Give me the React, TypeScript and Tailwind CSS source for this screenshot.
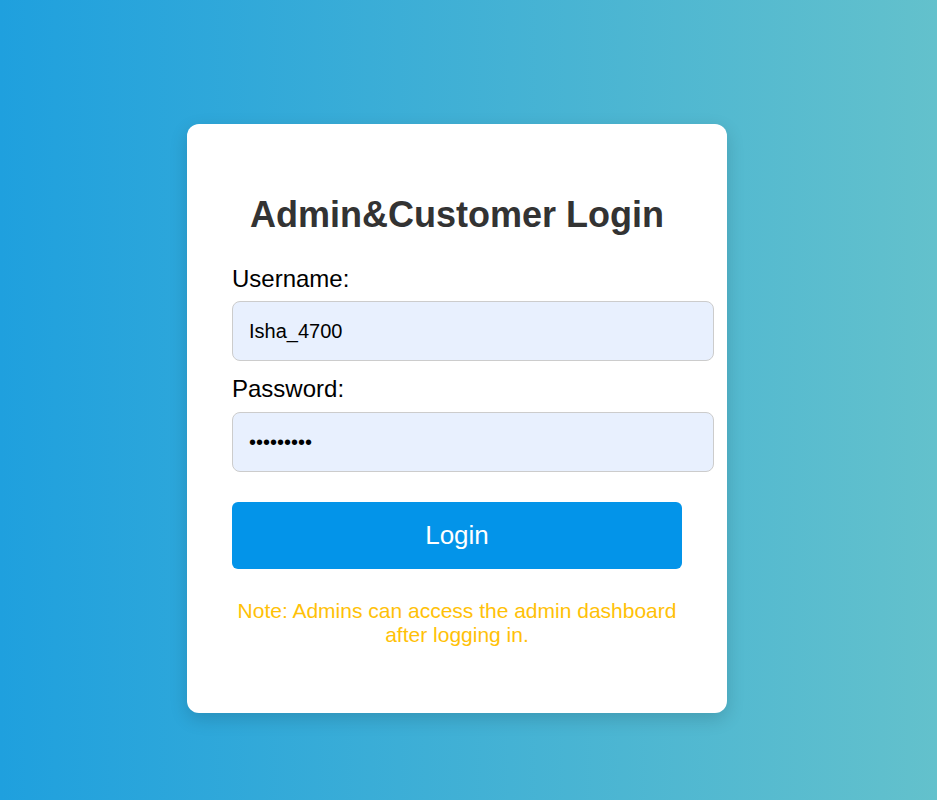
import { useState } from 'react';

export default function App() {
    const [username, setUsername] = useState('Isha_4700');
    const [password, setPassword] = useState('123456789');

    return (
        <div className="min-h-screen w-full flex justify-center items-start pt-[124px] pr-[23px] bg-linear-to-r/srgb from-[#1fa0de] to-[#63c1cc] font-['Liberation_Sans',Arial,sans-serif]">
            <div className="w-[540px] bg-white rounded-xl px-[45px] pt-[70px] pb-[66px] shadow-[0_6px_18px_rgba(0,0,0,0.15)]">
                <h2 className="text-center text-[36px] leading-[41px] font-bold text-[#333]">
                    Admin&amp;Customer Login
                </h2>

                <form className="mt-[31px]" onSubmit={(e) => e.preventDefault()}>
                    <label htmlFor="username" className="block text-[24px] leading-[26px] text-black">
                        Username:
                    </label>
                    <input
                        id="username"
                        type="text"
                        value={username}
                        onChange={(e) => setUsername(e.target.value)}
                        className="mt-[9px] block w-[482px] h-[60px] px-4 rounded-lg border border-[#ccc] bg-[#e8f0fe] text-[20px] text-black outline-none"
                    />

                    <label htmlFor="password" className="mt-[15px] block text-[24px] leading-[26px] text-black">
                        Password:
                    </label>
                    <input
                        id="password"
                        type="password"
                        value={password}
                        onChange={(e) => setPassword(e.target.value)}
                        className="mt-[10px] block w-[482px] h-[60px] px-4 rounded-lg border border-[#ccc] bg-[#e8f0fe] text-[20px] text-black outline-none"
                    />

                    <button
                        type="submit"
                        className="mt-[30px] block w-full h-[67px] rounded-md bg-[#0394e9] text-white text-[26px] cursor-pointer"
                    >
                        Login
                    </button>
                </form>

                <p className="mt-[30px] text-center text-[21px] leading-[24px] text-[#ffc107]">
                    Note: Admins can access the admin dashboard after logging in.
                </p>
            </div>
        </div>
    );
}
